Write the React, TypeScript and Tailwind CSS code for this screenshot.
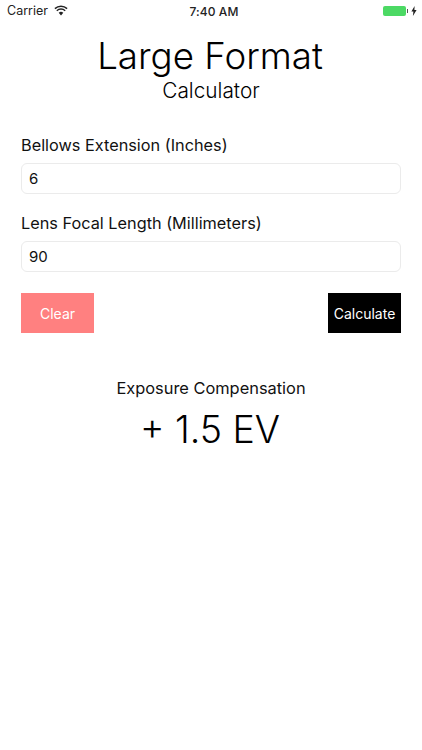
import React from "react";

const font = { fontFamily: "Inter, sans-serif" };

function Wifi() {
  return (
    <svg width="14" height="11" viewBox="0 0 14 11" className="ml-[6px] mb-[2px]">
      <path d="M7 10.5 4.7 7.8a3.4 3.4 0 0 1 4.6 0Z" fill="#222" />
      <path d="M2.8 5.8a6.1 6.1 0 0 1 8.4 0" fill="none" stroke="#222" strokeWidth="1.5" />
      <path d="M.9 3.6a9 9 0 0 1 12.2 0" fill="none" stroke="#222" strokeWidth="1.5" />
    </svg>
  );
}

function StatusBar() {
  return (
    <div className="flex items-center justify-between h-[22px] pl-[7px] pr-[5px] text-[12.5px] text-[#222]">
      <div className="flex items-center w-[70px]">
        <span>Carrier</span>
        <Wifi />
      </div>
      <div className="ml-[4px] pt-[1px] text-center font-medium text-[12px] tracking-[0.1px]">7:40 AM</div>
      <div className="flex items-center justify-end w-[70px]">
        <div className="w-[23px] h-[10px] rounded-[2px] bg-[#4cd964]" />
        <div className="w-[1px] h-[4px] bg-[#555] ml-[1px]" />
        <svg width="6" height="10" viewBox="0 0 6 10" className="ml-[3px]">
          <path d="M3.6 0 .4 5.6h2L1.9 10l3.7-6H3.4Z" fill="#222" />
        </svg>
      </div>
    </div>
  );
}

function Field({ label, value }: { label: string; value: string }) {
  return (
    <div className="flex flex-col">
      <label className="text-[16.3px] leading-[22px] text-[#111]">{label}</label>
      <input
        readOnly
        value={value}
        className="mt-[7px] h-[31px] rounded-[6px] border border-[#ebebeb] px-[7px] text-[15px] text-[#111] outline-none"
        style={font}
      />
    </div>
  );
}

export default function App() {
  return (
    <div className="w-[422px] h-[750px] bg-white text-black overflow-hidden" style={font}>
      <StatusBar />
      <div className="flex flex-col items-center">
        <h1 className="mt-[11px] text-[36.7px] leading-[46px] font-[350] -translate-x-[1px]">Large Format</h1>
        <h2 className="text-[20.8px] leading-[24px] font-[350]">Calculator</h2>
      </div>
      <div className="mt-[31px] px-[21px] flex flex-col gap-[18px]">
        <Field label="Bellows Extension (Inches)" value="6" />
        <Field label="Lens Focal Length (Millimeters)" value="90" />
      </div>
      <div className="mt-[21px] px-[21px] flex justify-between">
        <button className="w-[73px] h-[40px] bg-[#ff8080] text-white text-[14px]">Clear</button>
        <button className="w-[73px] h-[40px] bg-black text-white text-[14px]">Calculate</button>
      </div>
      <div className="mt-[44px] flex flex-col items-center">
        <div className="text-[16.4px] leading-[22px] text-[#111]">Exposure Compensation</div>
        <div className="mt-[8px] text-[37.5px] leading-[46px] font-[350] -translate-x-[1px]">+ 1.5 EV</div>
      </div>
    </div>
  );
}
